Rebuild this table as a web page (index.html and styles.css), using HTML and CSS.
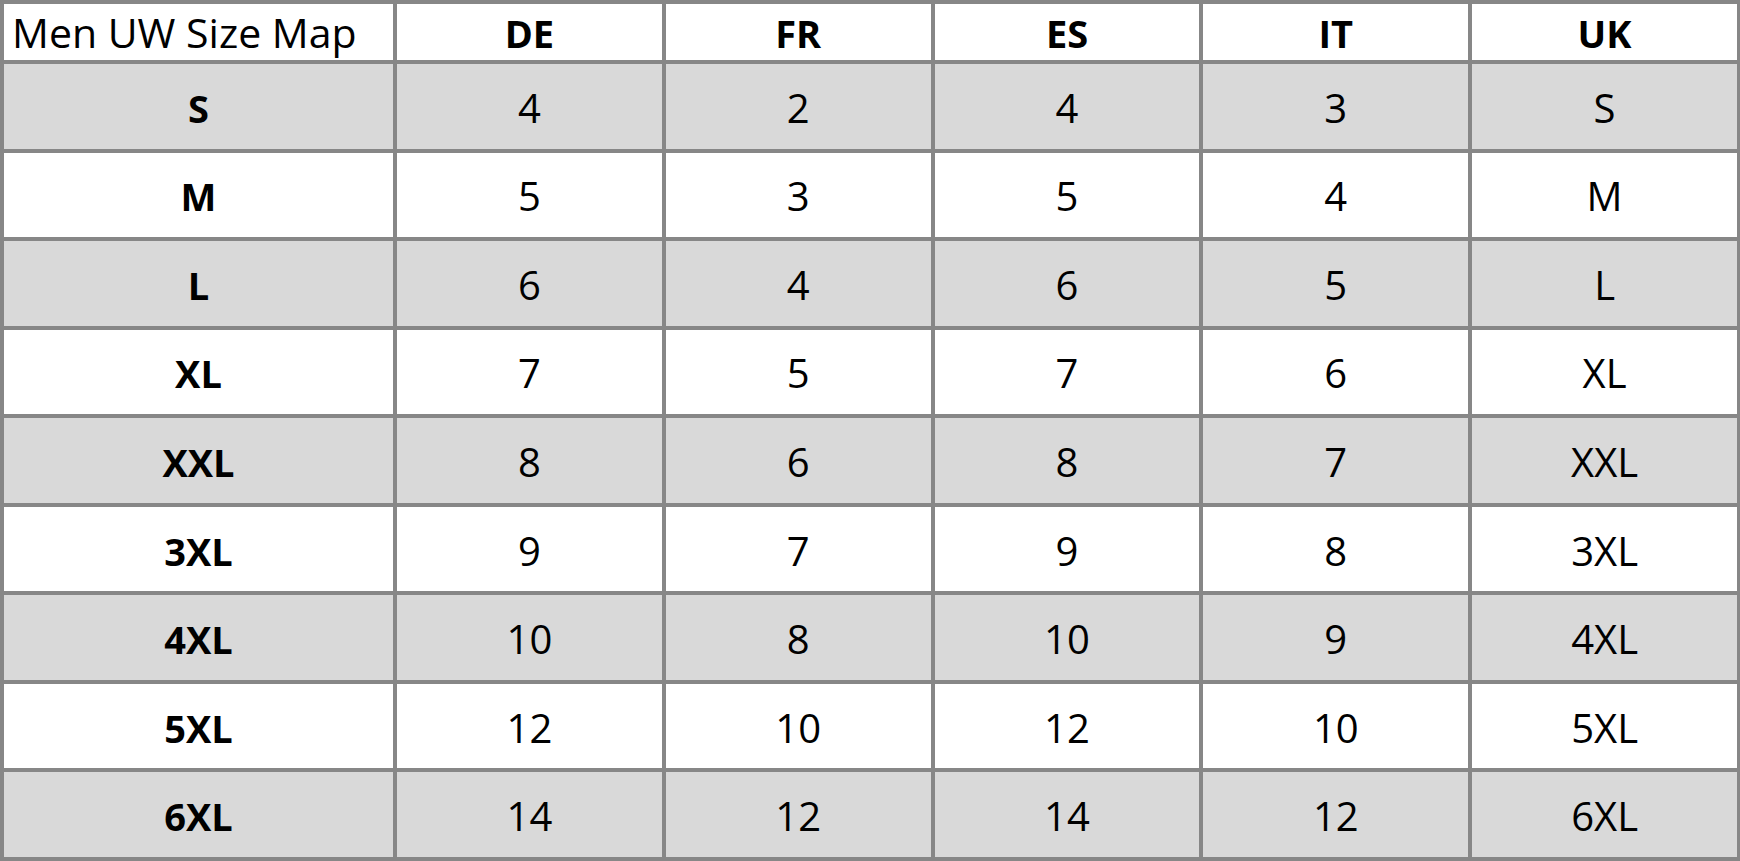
FILE: index.html
```html
<!DOCTYPE html>
<html>
<head>
<meta charset="utf-8">
<link rel="stylesheet" href="styles.css">
</head>
<body>
<div class="chart">
  <div class="cell head title">Men UW Size Map</div>
  <div class="cell head">DE</div>
  <div class="cell head">FR</div>
  <div class="cell head">ES</div>
  <div class="cell head">IT</div>
  <div class="cell head">UK</div>

  <div class="cell size odd">S</div><div class="cell odd">4</div><div class="cell odd">2</div><div class="cell odd">4</div><div class="cell odd">3</div><div class="cell odd">S</div>
  <div class="cell size">M</div><div class="cell">5</div><div class="cell">3</div><div class="cell">5</div><div class="cell">4</div><div class="cell">M</div>
  <div class="cell size odd">L</div><div class="cell odd">6</div><div class="cell odd">4</div><div class="cell odd">6</div><div class="cell odd">5</div><div class="cell odd">L</div>
  <div class="cell size">XL</div><div class="cell">7</div><div class="cell">5</div><div class="cell">7</div><div class="cell">6</div><div class="cell">XL</div>
  <div class="cell size odd">XXL</div><div class="cell odd">8</div><div class="cell odd">6</div><div class="cell odd">8</div><div class="cell odd">7</div><div class="cell odd">XXL</div>
  <div class="cell size">3XL</div><div class="cell">9</div><div class="cell">7</div><div class="cell">9</div><div class="cell">8</div><div class="cell">3XL</div>
  <div class="cell size odd">4XL</div><div class="cell odd">10</div><div class="cell odd">8</div><div class="cell odd">10</div><div class="cell odd">9</div><div class="cell odd">4XL</div>
  <div class="cell size">5XL</div><div class="cell">12</div><div class="cell">10</div><div class="cell">12</div><div class="cell">10</div><div class="cell">5XL</div>
  <div class="cell size odd">6XL</div><div class="cell odd">14</div><div class="cell odd">12</div><div class="cell odd">14</div><div class="cell odd">12</div><div class="cell odd">6XL</div>
</div>
</body>
</html>
```

FILE: styles.css
```css
html, body {
  margin: 0;
  padding: 0;
  background: #ffffff;
}

.chart {
  width: 1740px;
  height: 861px;
  box-sizing: border-box;
  padding: 4px 3px 4px 4px;
  background: #878787;
  display: grid;
  grid-template-columns: 389px repeat(5, 1fr);
  grid-template-rows: 56px repeat(9, 1fr);
  gap: 4px;
  font-family: "Open Sans", "Noto Sans", sans-serif;
  font-size: 40px;
  line-height: 1;
  color: #000000;
}

.cell {
  background: #ffffff;
  display: flex;
  align-items: center;
  justify-content: center;
  padding-top: 3px;
  box-sizing: border-box;
}

.cell.odd {
  background: #d9d9d9;
}

.head {
  font-weight: 700;
  font-size: 38px;
  padding-top: 1px;
}

.head.title {
  font-weight: 400;
  font-size: 41px;
  justify-content: flex-start;
  padding-left: 8px;
}

.size {
  font-weight: 700;
  font-size: 38px;
}
```
